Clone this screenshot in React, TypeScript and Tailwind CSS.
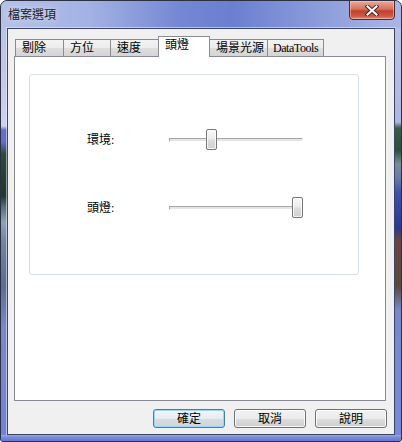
const cjk = "font-['Liberation_Serif','Noto_Sans_CJK_TC',serif]"

type Tab = { label: string; width: string; active?: boolean; noLeft?: boolean; last?: boolean }

const tabs: Tab[] = [
  { label: '剔除', width: 'w-[48px]' },
  { label: '方位', width: 'w-[47px]' },
  { label: '速度', width: 'w-[48px]' },
  { label: '頭燈', width: 'w-[52px]', active: true },
  { label: '場景光源', width: 'w-[57px]', noLeft: true },
  { label: 'DataTools', width: 'w-[57px]', last: true },
]

function TabItem({ tab }: { tab: Tab }) {
  if (tab.active) {
    return (
      <div
        className={`${tab.width} relative z-10 -mb-px h-[21px] border border-b-0 border-[#898c95] bg-white pl-[6px] text-[12px] leading-[16px] text-black`}
      >
        {tab.label}
      </div>
    )
  }
  return (
    <div
      className={`${tab.width} h-[17px] border-t border-[#898c95] ${tab.noLeft ? '' : 'border-l'} ${tab.last ? 'border-r pl-[5px] tracking-[-0.45px]' : 'pl-[6px]'} bg-[linear-gradient(180deg,#f3f3f3_0%,#ececec_50%,#dedede_51%,#d5d5d5_100%)] text-[12px] leading-[16px] whitespace-nowrap text-black`}
    >
      {tab.label}
    </div>
  )
}

function Slider({ label, pos }: { label: string; pos: string }) {
  return (
    <div className="flex h-[21px] items-center">
      <div className="w-[139px] pl-[57px] text-[12px] leading-[16px] text-black">{label}</div>
      <div className="relative flex h-[21px] w-[134px] items-center">
        <div className="h-[4px] w-full border-t border-l border-t-[#a6a6a6] border-l-[#a6a6a6] border-b border-r border-b-white border-r-white bg-[#e4e6e6]" />
        <div
          className={`absolute top-0 ${pos} h-[21px] w-[11px] rounded-[2px] border border-[#757575] bg-[linear-gradient(180deg,#f8f8f8_0%,#ececec_45%,#dcdcdc_55%,#d2d2d2_100%)] shadow-[inset_0_0_0_1px_rgba(255,255,255,0.8)]`}
        />
      </div>
    </div>
  )
}

function WinButton({ label, primary }: { label: string; primary?: boolean }) {
  return (
    <button
      className={`h-[19px] w-[72px] rounded-[3px] border text-[12px] leading-[16px] text-black ${
        primary
          ? 'border-[#3c7fb1] bg-[linear-gradient(180deg,#f2f6f9_0%,#e6ecf0_50%,#d6dde2_51%,#cfd6db_100%)] shadow-[inset_0_0_0_1px_#9fd6f7]'
          : 'border-[#707070] bg-[linear-gradient(180deg,#f2f2f2_0%,#ebebeb_50%,#dddddd_51%,#cfcfcf_100%)] shadow-[inset_0_0_0_1px_rgba(255,255,255,0.85)]'
      }`}
    >
      {label}
    </button>
  )
}

export default function App() {
  return (
    <div className={`h-[442px] w-[402px] bg-white ${cjk}`}>
      <div className="flex h-[442px] w-[402px] flex-col overflow-hidden rounded-t-[7px] rounded-b-[3px] border border-[#2b3142] bg-[#7a8ad6]">
        {/* title bar */}
        <div className="flex h-[27px] items-start justify-between bg-[linear-gradient(90deg,#b6c1e8_0%,#a3b2e3_22%,#7487d4_45%,#6b7fd0_58%,#8c9ddc_80%,#a9b6e6_100%)]">
          <span className="pl-[7px] pt-[6px] text-[12px] leading-[16px] text-[#1c1c24] [text-shadow:0_0_6px_rgba(255,255,255,0.7)]">
            檔案選項
          </span>
          <div className="mr-[6px] -mt-px flex h-[20px] w-[46px] items-center justify-center rounded-b-[4px] border border-[#5b2a24] bg-[linear-gradient(180deg,#e9a99c_0%,#d6715f_45%,#c2402c_55%,#cf5a44_85%,#e0907a_100%)] shadow-[inset_0_0_0_1px_rgba(255,220,210,0.45)]">
            <svg width="14" height="11" viewBox="0 0 14 11">
              <path d="M2.5 1.5 L11.5 9.5 M11.5 1.5 L2.5 9.5" stroke="#4a2a2a" strokeWidth="4" strokeLinecap="square" />
              <path d="M2.5 1.5 L11.5 9.5 M11.5 1.5 L2.5 9.5" stroke="#ffffff" strokeWidth="2" strokeLinecap="square" />
            </svg>
          </div>
        </div>

        <div className="flex h-[407px]">
          <div className="w-[6px] bg-[linear-gradient(180deg,#b9c3e8_0px,#c6ccec_70px,#cdd2ef_98px,#6272c8_102px,#6070c6_114px,#2c4a3a_126px,#1f392d_168px,#5c7282_180px,#8ea2b8_194px,#7383a2_214px,#5d6c92_258px,#7a89c8_300px,#7282d6_407px)]" />

          {/* client area */}
          <div className="flex w-[388px] flex-col border border-[#3b4462] bg-[#f0f0f0] pl-[6px] pt-[7px] shadow-[0_0_0_1px_rgba(235,240,255,0.55)]">
            <div className="flex items-end pl-px">
              {tabs.map((t) => (
                <TabItem key={t.label} tab={t} />
              ))}
            </div>
            <div className="h-[345px] w-[372px] border border-[#898c95] bg-white">
              <div className="ml-[14px] mt-[17px] flex h-[201px] w-[330px] flex-col gap-[47px] rounded-[3px] border border-[#d5dfe5] pt-[54px]">
                <Slider label="環境:" pos="left-[37px]" />
                <Slider label="頭燈:" pos="left-[123px]" />
              </div>
            </div>
            <div className="mt-[8px] flex justify-end gap-[9px] pr-[7px]">
              <WinButton label="確定" primary />
              <WinButton label="取消" />
              <WinButton label="說明" />
            </div>
          </div>

          <div className="w-[6px] bg-[linear-gradient(180deg,#b8c2e8_0px,#aeb7e2_94px,#3b5a49_100px,#2e4c3a_122px,#7b8d99_136px,#6a7aa8_150px,#3b51a8_165px,#2a3890_200px,#6a4242_212px,#5a4838_258px,#7a88c8_282px,#7888d8_407px)]" />
        </div>

        <div className="h-[6px] bg-[linear-gradient(180deg,#9aa7e2_0%,#7a8bd8_40%,#6577d0_100%)]" />
      </div>
    </div>
  )
}
